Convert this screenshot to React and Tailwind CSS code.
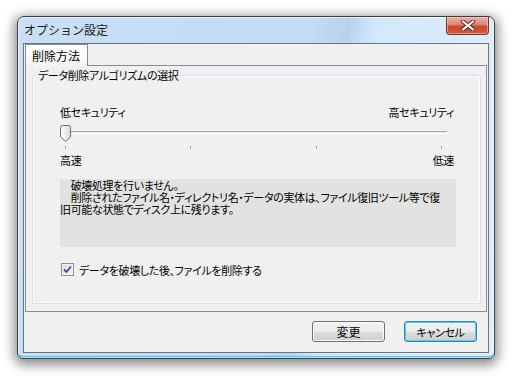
import React from "react";

function CloseGlyph() {
  return (
    <svg width="14" height="11" viewBox="0 0 14 11">
      <path d="M2 1.5 L12 9.5 M12 1.5 L2 9.5" stroke="#5a2a24" strokeWidth="4" strokeLinecap="round" />
      <path d="M2 1.5 L12 9.5 M12 1.5 L2 9.5" stroke="#ffffff" strokeWidth="2.2" strokeLinecap="round" />
    </svg>
  );
}

function Thumb() {
  return (
    <svg width="11" height="17" viewBox="0 0 11 17" className="block">
      <defs>
        <linearGradient id="thumbFill" x1="0" y1="0" x2="1" y2="0">
          <stop offset="0" stopColor="#ffffff" />
          <stop offset="1" stopColor="#d9d9d9" />
        </linearGradient>
      </defs>
      <path d="M0.5 2.5 Q0.5 0.5 2.5 0.5 H8.5 Q10.5 0.5 10.5 2.5 V12 L5.5 16.5 L0.5 12 Z" fill="url(#thumbFill)" stroke="#6f6f6f" />
    </svg>
  );
}

function CheckBox() {
  return (
    <div className="w-[13px] h-[13px] border border-[#8e8f8f] bg-[linear-gradient(135deg,#d8d8d8,#f7f7f7)] shadow-[inset_0_0_0_1px_#f4f4f4] flex items-center justify-center">
      <svg width="11" height="11" viewBox="0 0 11 11">
        <path d="M2 5.5 L4.5 8 L9 2.5" fill="none" stroke="#3b4f96" strokeWidth="1.8" />
      </svg>
    </div>
  );
}

export default function App() {
  return (
    <div className="w-[516px] h-[376px] bg-white pt-[16px] pl-[17px] font-['Noto_Sans_CJK_JP','Noto_Sans',sans-serif] text-[12px] leading-[12px] text-black">
      {/* window */}
      <div className="w-[478px] h-[343px] rounded-t-[7px] rounded-b-[6px] border border-[#3b3e44] bg-[linear-gradient(100deg,#cadff5_0%,#c3dbf3_55%,#b9d2ec_62%,#d3e8fb_67%,#e1effc_100%)] shadow-[inset_0_0_0_1px_rgba(255,255,255,0.6),inset_0_-2px_0_#4cc3ee,0_3px_12px_3px_rgba(0,0,0,0.45)] px-[5px] flex flex-col">
        {/* title bar */}
        <div className="h-[26px] flex items-start justify-between">
          <div className="pt-[7px] pl-[1px] text-[#1b1b1b]">オプション設定</div>
          <div className="w-[43px] h-[18px] rounded-b-[4px] border border-t-0 border-[#76332a] bg-[linear-gradient(180deg,#eab2a3_0%,#dc8672_45%,#c8472c_55%,#cf5a3a_100%)] shadow-[inset_0_0_0_1px_rgba(255,220,210,0.5)] flex items-center justify-center">
            <CloseGlyph />
          </div>
        </div>

        {/* client area */}
        <div className="h-[310px] border border-[#6a7480] bg-[#f0f0f0] flex flex-col">
          <div className="pl-[1px] pr-[1px]">
            {/* tab strip */}
            <div className="flex h-[21px]">
              <div className="w-[63px] h-[22px] border border-b-0 border-[#898c95] bg-[linear-gradient(180deg,#ffffff,#f4f4f4)] relative z-10 pl-[6px] pt-[5px]">
                削除方法
              </div>
            </div>
            {/* tab panel */}
            <div className="h-[247px] border border-[#898c95] bg-[#f0f0f0] pt-[3px] pl-[6px] text-[11px] tracking-[-0.35px] [font-feature-settings:'palt']">
              <fieldset className="w-[449px] h-[235px] border border-[#d5dfe5] rounded-[3px] shadow-[inset_0_0_0_1px_#ffffff]">
                <legend className="ml-[4px] px-[1px] bg-[#f0f0f0] leading-[12px]">データ削除アルゴリズムの選択</legend>

                <div className="pl-[27px]">
                  <div className="w-[394px] mt-[25px] flex justify-between items-center h-[12px]">
                    <span>低セキュリティ</span>
                    <span>高セキュリティ</span>
                  </div>

                  <div className="relative w-[387px] h-[32px] pt-[13px]">
                    <div className="h-[3px] border-t border-[#a9a9a9] bg-[#e6e6e6] border-b border-b-white" />
                    <div className="mt-[12px] px-[5px] flex justify-between">
                      <div className="w-[1px] h-[3px] bg-[#a0a0a0]" />
                      <div className="w-[1px] h-[3px] bg-[#a0a0a0]" />
                      <div className="w-[1px] h-[3px] bg-[#a0a0a0]" />
                      <div className="w-[1px] h-[3px] bg-[#a0a0a0]" />
                    </div>
                    <div className="absolute top-[7px] left-0">
                      <Thumb />
                    </div>
                  </div>

                  <div className="w-[394px] mt-[4px] flex justify-between items-center h-[12px]">
                    <span>高速</span>
                    <span>低速</span>
                  </div>

                  <div className="mt-[13px] w-[396px] h-[68px] bg-[#e2e2e2]">
                    <div className="whitespace-nowrap h-[12px]">　破壊処理を行いません。</div>
                    <div className="whitespace-nowrap h-[12px]">　削除されたファイル名・ディレクトリ名・データの実体は、ファイル復旧ツール等で復</div>
                    <div className="whitespace-nowrap h-[12px]">旧可能な状態でディスク上に残ります。</div>
                  </div>

                  <div className="mt-[16px] pl-[1px] flex items-center gap-[5px]">
                    <CheckBox />
                    <span>データを破壊した後、ファイルを削除する</span>
                  </div>
                </div>
              </fieldset>
            </div>
          </div>

          {/* buttons */}
          <div className="mt-[9px] pr-[11px] flex justify-end gap-[19px]">
            <button className="w-[73px] h-[21px] rounded-[3px] border border-[#707070] bg-[linear-gradient(180deg,#f2f2f2_0%,#ebebeb_50%,#dddddd_51%,#cfcfcf_100%)] shadow-[inset_0_0_0_1px_#fcfcfc] flex items-center justify-center">
              変更
            </button>
            <button className="w-[73px] h-[21px] rounded-[3px] border border-[#3c7fb1] bg-[linear-gradient(180deg,#f2f2f2_0%,#ebebeb_50%,#dddddd_51%,#cfcfcf_100%)] shadow-[inset_0_0_0_1px_#48d0f8] flex items-center justify-center text-[11px] tracking-[-0.35px] [font-feature-settings:'palt']">
              キャンセル
            </button>
          </div>
        </div>
      </div>
    </div>
  );
}
